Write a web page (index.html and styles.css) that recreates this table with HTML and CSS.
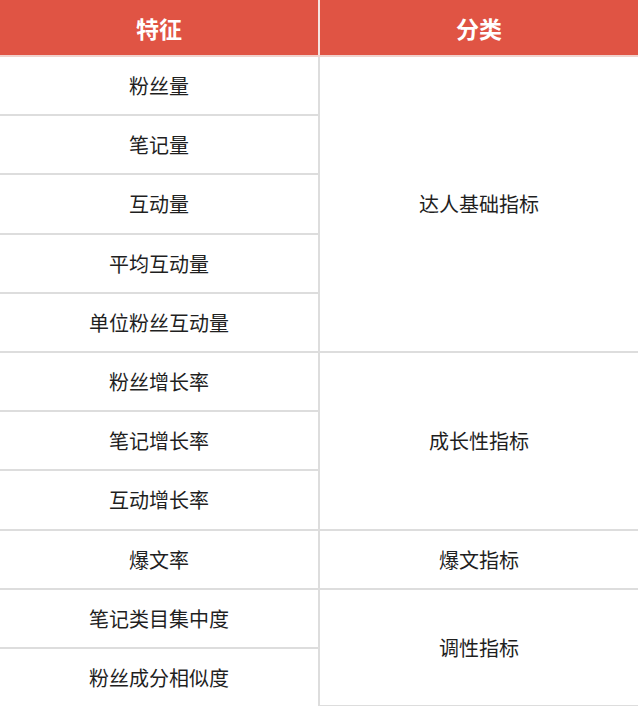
FILE: index.html
```html
<!DOCTYPE html>
<html lang="zh">
<head>
<meta charset="utf-8">
<link rel="stylesheet" href="styles.css">
</head>
<body>
<table class="tbl">
  <thead>
    <tr class="head">
      <th class="c1">特征</th>
      <th class="c2">分类</th>
    </tr>
  </thead>
  <tbody>
    <tr><td class="c1">粉丝量</td><td class="c2" rowspan="5">达人基础指标</td></tr>
    <tr><td class="c1">笔记量</td></tr>
    <tr><td class="c1">互动量</td></tr>
    <tr><td class="c1">平均互动量</td></tr>
    <tr><td class="c1">单位粉丝互动量</td></tr>
    <tr><td class="c1">粉丝增长率</td><td class="c2" rowspan="3">成长性指标</td></tr>
    <tr><td class="c1">笔记增长率</td></tr>
    <tr><td class="c1">互动增长率</td></tr>
    <tr><td class="c1">爆文率</td><td class="c2">爆文指标</td></tr>
    <tr><td class="c1">笔记类目集中度</td><td class="c2" rowspan="2">调性指标</td></tr>
    <tr><td class="c1">粉丝成分相似度</td></tr>
  </tbody>
</table>
</body>
</html>
```

FILE: styles.css
```css
html, body {
  margin: 0;
  padding: 0;
  background: #ffffff;
}
body {
  width: 638px;
  height: 706px;
  overflow: hidden;
  font-family: "PingFang SC", "Noto Sans CJK SC", "Noto Sans", sans-serif;
}
.tbl {
  width: 638px;
  border-collapse: collapse;
  table-layout: fixed;
}
.tbl th, .tbl td {
  padding: 0;
  text-align: center;
  vertical-align: middle;
}
.head th {
  height: 55px;
  background: #e05444;
  color: #ffffff;
  font-size: 23px;
  font-weight: 700;
  border-bottom: 2px solid #f0d2cd;
}
.head th.c1 {
  border-right: 2px solid #f6e3e0;
}
.tbl td {
  height: 57.2px;
  font-size: 20px;
  color: #1f1f1f;
  border-bottom: 2px solid #dddddd;
}
.tbl td.c1 {
  width: 318px;
  border-right: 2px solid #dddddd;
}
.tbl th.c1 {
  width: 318px;
}
.tbl tbody tr:last-child td {
  border-bottom: none;
}
```
